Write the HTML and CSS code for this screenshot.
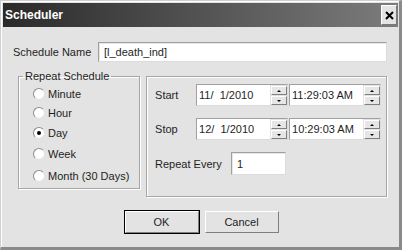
FILE: index.html
```html
<!DOCTYPE html>
<html lang="en">
<head>
    <meta charset="UTF-8">
    <meta name="viewport" content="width=device-width, initial-scale=1.0">
    <title>Scheduler</title>
    <link rel="stylesheet" href="styles.css">
</head>
<body>
    <div class="window">
        <div class="titlebar">
            <span class="title">Scheduler</span>
            <span class="close">
                <svg width="9" height="9" viewBox="0 0 9 9"><path d="M1 1 L8 8 M8 1 L1 8" stroke="#000" stroke-width="2"/></svg>
            </span>
        </div>
        <div class="body">
            <div class="name-row">
                <label class="name-label">Schedule Name</label>
                <div class="textbox name-box">[l_death_ind]</div>
            </div>

            <div class="panels">
                <fieldset class="repeat">
                    <legend>Repeat Schedule</legend>
                    <div class="radios">
                        <div class="radio"><span class="dot"></span>Minute</div>
                        <div class="radio"><span class="dot"></span>Hour</div>
                        <div class="radio"><span class="dot checked"></span>Day</div>
                        <div class="radio"><span class="dot"></span>Week</div>
                        <div class="radio"><span class="dot"></span>Month (30 Days)</div>
                    </div>
                </fieldset>

                <div class="times">
                    <div class="row">
                        <span class="row-label">Start</span>
                        <div class="picker">
                            <span class="value">11/&nbsp; 1/2010</span>
                            <span class="spin"><span class="up"></span><span class="down"></span></span>
                        </div>
                        <div class="picker">
                            <span class="value">11:29:03 AM</span>
                            <span class="spin"><span class="up"></span><span class="down"></span></span>
                        </div>
                    </div>
                    <div class="row">
                        <span class="row-label">Stop</span>
                        <div class="picker">
                            <span class="value">12/&nbsp; 1/2010</span>
                            <span class="spin"><span class="up"></span><span class="down"></span></span>
                        </div>
                        <div class="picker">
                            <span class="value">10:29:03 AM</span>
                            <span class="spin"><span class="up"></span><span class="down"></span></span>
                        </div>
                    </div>
                    <div class="row repeat-row">
                        <span class="every-label">Repeat Every</span>
                        <div class="textbox every-box">1</div>
                    </div>
                </div>
            </div>

            <div class="buttons">
                <div class="default"><button>OK</button></div>
                <button>Cancel</button>
            </div>
        </div>
    </div>
</body>
</html>
```

FILE: styles.css
```css
body {
    margin: 0;
    font-family: "Liberation Sans", Arial, sans-serif;
    font-size: 11px;
    color: #1e1e1e;
}
.window {
    width: 402px;
    height: 250px;
    box-sizing: border-box;
    background: #e3e3e3;
    border-top: 1px solid #cfcfcf;
    border-left: 1px solid #cfcfcf;
    border-right: 3px solid #8a8a8a;
    border-bottom: 3px solid #8a8a8a;
    padding: 2px 1px 0 2px;
    box-shadow: inset 1px 1px 0 #fff;
}
.titlebar {
    height: 24px;
    background: linear-gradient(to right, #2a2a2a, #7c7c7c);
    display: flex;
    align-items: center;
    justify-content: space-between;
    padding: 0 1px 0 2px;
}
.title {
    color: #fff;
    font-weight: bold;
    font-size: 12px;
}
.close {
    width: 14px;
    height: 18px;
    background: #e4e4e4;
    border-top: 1px solid #fff;
    border-left: 1px solid #fff;
    border-right: 1px solid #7a7a7a;
    border-bottom: 1px solid #7a7a7a;
    display: flex;
    align-items: center;
    justify-content: center;
}
.body {
    padding: 15px 11px 0 10px;
}
.name-row {
    display: flex;
    align-items: center;
}
.name-label {
    width: 85px;
}
.textbox {
    box-sizing: border-box;
    background: #fff;
    border-top: 1px solid #a0a0a0;
    border-left: 1px solid #a0a0a0;
    border-right: 1px solid #dcdcdc;
    border-bottom: 1px solid #dcdcdc;
    box-shadow: inset 1px 1px 0 #e6e6e6;
    display: flex;
    align-items: center;
    padding-left: 5px;
}
.name-box {
    width: 289px;
    height: 20px;
}
.panels {
    display: flex;
    align-items: flex-start;
    margin-top: 8px;
    padding-left: 5px;
    gap: 6px;
}
.repeat,
.times {
    border: 1px solid #a6a6a6;
    box-shadow: inset 1px 1px 0 #fff, 1px 1px 0 #fff;
}
.repeat {
    margin: 0;
    width: 123px;
    height: 119px;
    box-sizing: border-box;
    padding: 2px 0 0 14px;
}
.repeat legend {
    padding: 0 2px;
    margin-left: -10px;
    line-height: 13px;
}
.radios {
    display: grid;
    grid-template-rows: 18px 19px 21px 22px 22px;
}
.radio {
    display: flex;
    align-items: center;
}
.dot {
    width: 12px;
    height: 12px;
    box-sizing: border-box;
    border-radius: 50%;
    background: #fff;
    border: 1px solid #8c8c8c;
    border-right-color: #e0e0e0;
    border-bottom-color: #e0e0e0;
    margin-right: 3px;
    display: flex;
    align-items: center;
    justify-content: center;
}
.dot.checked::after {
    content: "";
    width: 4px;
    height: 4px;
    border-radius: 50%;
    background: #000;
}
.times {
    margin-top: 6px;
    width: 243px;
    height: 121px;
    box-sizing: border-box;
    padding: 7px 0 0 8px;
}
.row {
    display: flex;
    align-items: center;
    margin-bottom: 12px;
}
.row-label {
    width: 41px;
}
.picker {
    box-sizing: border-box;
    width: 92px;
    height: 22px;
    margin-right: 1px;
    background: #fff;
    border-top: 1px solid #a0a0a0;
    border-left: 1px solid #a0a0a0;
    border-right: 1px solid #dcdcdc;
    border-bottom: 1px solid #dcdcdc;
    display: flex;
    align-items: center;
}
.value {
    flex: 1;
    padding-left: 2px;
}
.spin {
    display: flex;
    flex-direction: column;
    gap: 1px;
    background: #e3e3e3;
    padding: 1px 0 0 1px;
    height: 100%;
    box-sizing: border-box;
}
.up,
.down {
    width: 16px;
    height: 9px;
    box-sizing: border-box;
    background: #e6e6e6;
    border-top: 1px solid #fff;
    border-left: 1px solid #fff;
    border-right: 1px solid #7f7f7f;
    border-bottom: 1px solid #7f7f7f;
    display: flex;
    align-items: center;
    justify-content: center;
}
.up::after,
.down::after {
    content: "";
    border-left: 2px solid transparent;
    border-right: 2px solid transparent;
}
.up::after {
    border-bottom: 2px solid #000;
}
.down::after {
    border-top: 2px solid #000;
}
.repeat-row {
    margin-top: 0;
}
.every-label {
    width: 76px;
}
.every-box {
    width: 55px;
    height: 23px;
}
.buttons {
    display: flex;
    justify-content: center;
    align-items: center;
    gap: 5px;
    margin-top: 13px;
    padding-left: 2px;
}
.default {
    border: 1px solid #000;
    display: flex;
}
button {
    width: 74px;
    height: 22px;
    font-family: "Liberation Sans", Arial, sans-serif;
    font-size: 11px;
    color: #1e1e1e;
    background: #e3e3e3;
    border-top: 1px solid #fff;
    border-left: 1px solid #fff;
    border-right: 1px solid #7f7f7f;
    border-bottom: 1px solid #7f7f7f;
    padding: 0;
}
```
